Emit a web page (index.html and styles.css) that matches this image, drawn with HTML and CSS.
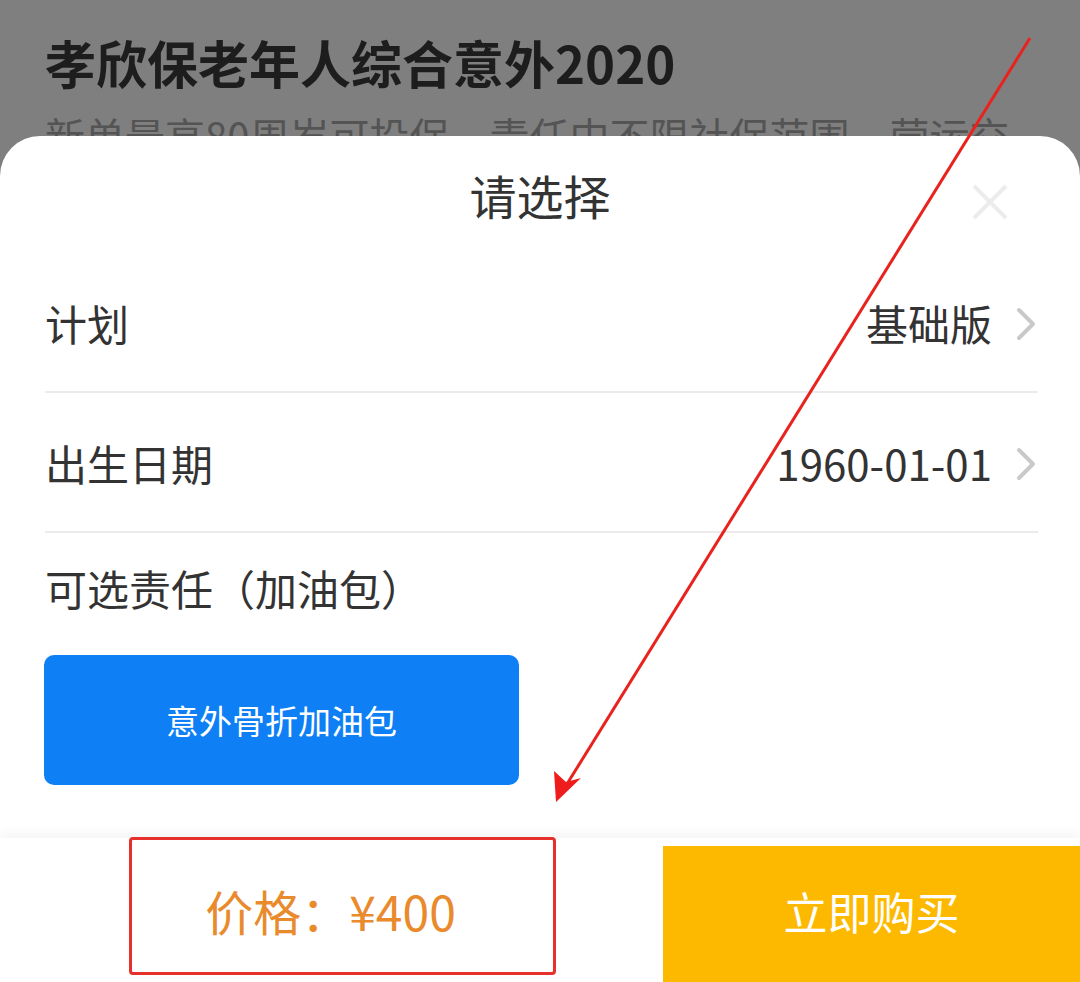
FILE: index.html
```html
<!DOCTYPE html>
<html lang="zh">
<head>
<meta charset="utf-8">
<title>请选择</title>
<link rel="stylesheet" href="styles.css">
</head>
<body>
<div class="screen">
  <header class="product">
    <h1 class="product-title">孝欣保老年人综合意外2020</h1>
    <p class="product-sub">新单最高80周岁可投保，责任中不限社保范围，营运交</p>
  </header>
  <section class="sheet">
    <div class="sheet-head">
      <h2 class="sheet-title">请选择</h2>
      <span class="close" aria-label="关闭">
        <svg viewBox="0 0 40 40" width="40" height="40"><path d="M4 4 L36 36 M36 4 L4 36" stroke="#ececec" stroke-width="4" fill="none"/></svg>
      </span>
    </div>
    <div class="row divided">
      <span class="row-label">计划</span>
      <span class="row-value">基础版<svg class="chev" viewBox="0 0 24 36" width="24" height="36"><path d="M5 4 L19 18 L5 32" stroke="#c9c9c9" stroke-width="4" fill="none" stroke-linecap="round" stroke-linejoin="round"/></svg></span>
    </div>
    <div class="row divided">
      <span class="row-label">出生日期</span>
      <span class="row-value">1960-01-01<svg class="chev" viewBox="0 0 24 36" width="24" height="36"><path d="M5 4 L19 18 L5 32" stroke="#c9c9c9" stroke-width="4" fill="none" stroke-linecap="round" stroke-linejoin="round"/></svg></span>
    </div>
    <div class="options">
      <div class="options-label">可选责任（加油包）</div>
      <button class="option-btn">意外骨折加油包</button>
    </div>
    <footer class="buybar">
      <div class="price">价格：¥400</div>
      <button class="buy">立即购买</button>
    </footer>
  </section>
  <div class="anno-box"></div>
  <svg class="anno-arrow" viewBox="0 0 1080 982" width="1080" height="982">
    <line x1="1030" y1="38" x2="567" y2="784" stroke="#e8231e" stroke-width="3"/>
    <polygon points="556,802 554,771 566,782 581,778" fill="#ee1c1c"/>
  </svg>
</div>
</body>
</html>
```
FILE: styles.css
```css
html, body {
  margin: 0;
  padding: 0;
}
body {
  font-family: "Noto Sans CJK SC", "Noto Sans", sans-serif;
  background: #7f7f7f;
}
.screen {
  position: relative;
  width: 1080px;
  height: 982px;
  overflow: hidden;
  background: #7f7f7f;
  display: flex;
  flex-direction: column;
}
.product {
  height: 136px;
  flex: none;
  padding: 0 45px;
  overflow: hidden;
  box-sizing: border-box;
}
.product-title {
  margin: 24px 0 0;
  font-size: 51px;
  line-height: 76px;
  font-weight: 700;
  color: #1d1d1d;
  white-space: nowrap;
}
.product-sub {
  margin: 8px 0 0;
  font-size: 40px;
  line-height: 54px;
  color: #545454;
  white-space: nowrap;
}
.sheet {
  flex: 1;
  background: #fff;
  border-radius: 40px 40px 0 0;
  display: flex;
  flex-direction: column;
  position: relative;
}
.sheet-head {
  height: 117px;
  display: flex;
  align-items: center;
  justify-content: center;
  position: relative;
}
.sheet-title {
  margin: 0;
  margin-top: 0;
  font-size: 47px;
  font-weight: 400;
  color: #333;
}
.close {
  position: absolute;
  right: 70px;
  top: 46px;
  width: 40px;
  height: 40px;
}
.close svg { display: block; }
.row {
  height: 140px;
  margin: 0 42px 0 45px;
  display: flex;
  align-items: center;
  justify-content: space-between;
  font-size: 42px;
  color: #333;
  box-sizing: border-box;
}
.divided {
  border-bottom: 2px solid #ebebeb;
}
.row-value {
  display: flex;
  align-items: center;
}
.chev {
  margin-left: 22px;
  margin-top: 4px;
}
.options {
  padding: 26px 0 0 44px;
}
.options-label {
  font-size: 42px;
  line-height: 58px;
  color: #333;
  margin-left: 1px;
}
.option-btn {
  margin-top: 38px;
  width: 475px;
  height: 130px;
  border: none;
  border-radius: 10px;
  background: #0e7ff5;
  color: #fff;
  font-family: inherit;
  font-size: 33px;
  display: flex;
  align-items: center;
  justify-content: center;
  padding: 0;
}
.buybar {
  margin-top: auto;
  height: 144px;
  display: flex;
  align-items: flex-end;
  background: #fff;
  box-shadow: 0 -6px 10px rgba(0,0,0,0.04);
}
.price {
  flex: 1;
  height: 144px;
  display: flex;
  align-items: center;
  justify-content: center;
  padding-right: 2px;
  color: #e98a2c;
  font-size: 48px;
}
.buy {
  width: 417px;
  height: 136px;
  border: none;
  background: #fdb900;
  color: #fff;
  font-family: inherit;
  font-size: 44px;
  padding: 0;
  padding-bottom: 6px;
}
.anno-box {
  position: absolute;
  left: 129px;
  top: 837px;
  width: 427px;
  height: 138px;
  border: 3px solid #e5302c;
  border-radius: 4px;
  box-sizing: border-box;
}
.anno-arrow {
  position: absolute;
  left: 0;
  top: 0;
  pointer-events: none;
}
```
